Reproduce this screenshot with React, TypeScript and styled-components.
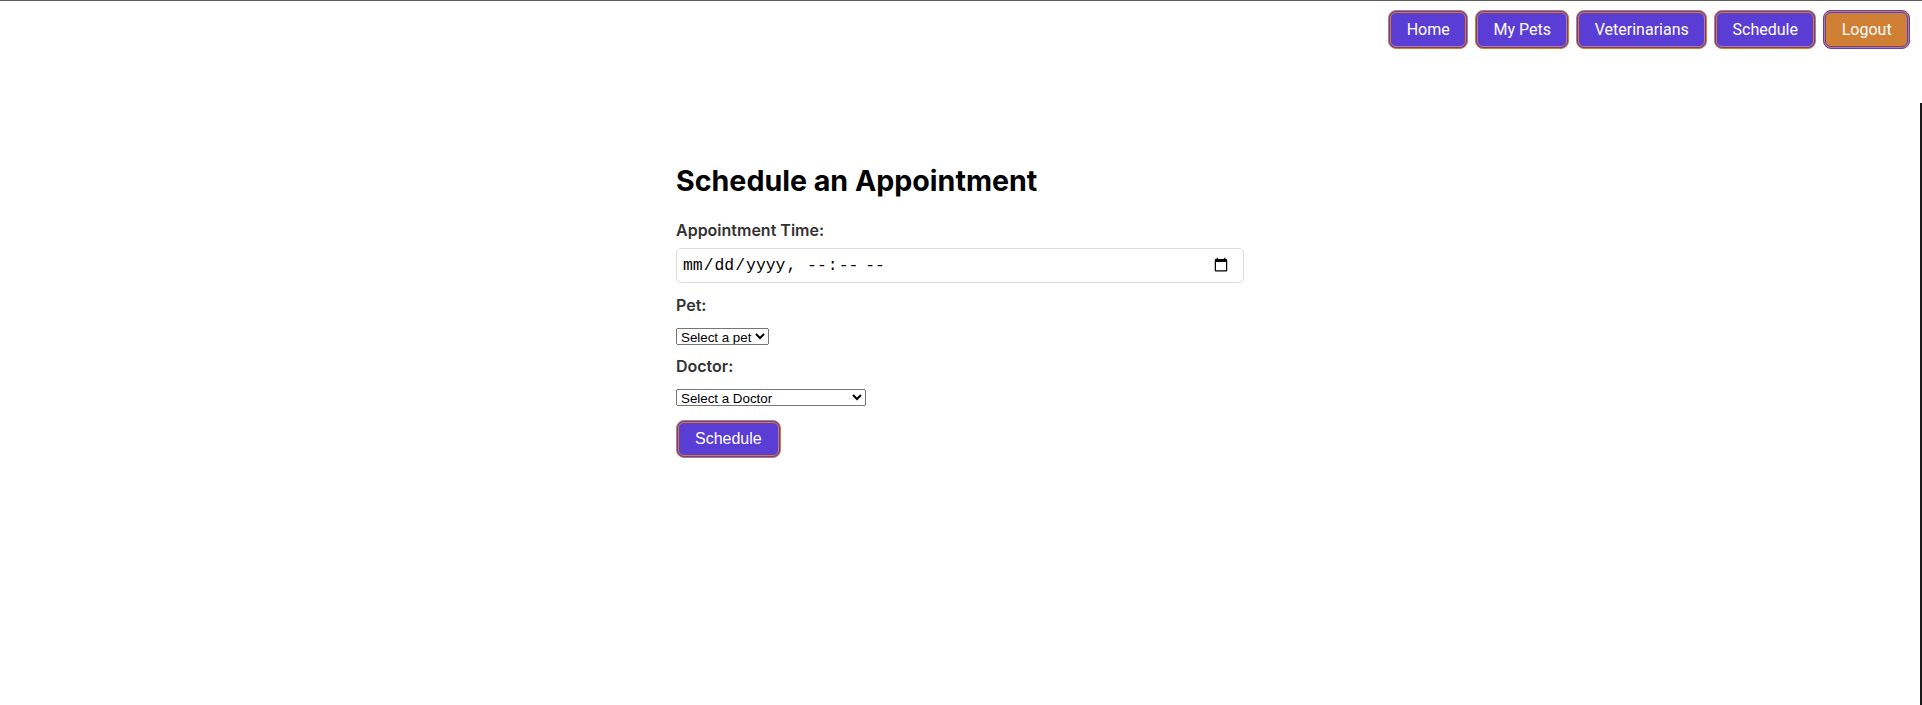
import React from "react";
import styled, { createGlobalStyle, css } from "styled-components";

const GlobalStyle = createGlobalStyle`
  html, body { margin: 0; padding: 0; background: #ffffff; }
  body { font-family: Inter, "Noto Sans", sans-serif; }
`;

const PURPLE = "#5a3dd4";
const ORANGE = "#d08034";

const Header = styled.header`
  display: flex;
  justify-content: flex-end;
  gap: 7px;
  border-top: 1px solid #5c5c5c;
  padding: 9px 12px 0 0;
`;

const NavButton = styled.button<{ $variant?: "primary" | "accent" }>`
  font-family: Roboto, "Liberation Sans", sans-serif;
  font-size: 16px;
  line-height: 19px;
  color: #ffffff;
  padding: 7px 15.4px;
  border-radius: 8px;
  cursor: pointer;
  ${(p) =>
    p.$variant === "accent"
      ? css`
          background: ${ORANGE};
          border: 3px double ${PURPLE};
        `
      : css`
          background: ${PURPLE};
          border: 3px double ${ORANGE};
        `}
`;

const Main = styled.main`
  margin-top: 54px;
  border-right: 2px solid #1a1a1a;
  min-height: calc(100vh - 102px);
  display: flex;
  justify-content: center;
`;

const Container = styled.section`
  width: 568px;
  padding-top: 61px;
`;

const Title = styled.h1`
  font-family: Inter, "Noto Sans", sans-serif;
  font-size: 28.6px;
  font-weight: 700;
  color: #000;
  margin: 0 0 23px 0;
  line-height: 34px;
`;

const Form = styled.form`
  display: flex;
  flex-direction: column;
  align-items: flex-start;
`;

const Label = styled.label<{ $gap?: number }>`
  display: block;
  font-family: Inter, "Noto Sans", sans-serif;
  font-size: 16px;
  font-weight: 600;
  line-height: 19px;
  color: #333333;
  margin-bottom: ${(p) => p.$gap ?? 8}px;
`;

const DateInput = styled.input`
  box-sizing: border-box;
  width: 568px;
  height: 35px;
  padding: 0 12px 0 5px;
  border: 1px solid #dcdcdc;
  border-radius: 5px;
  font-family: "Liberation Mono", monospace;
  font-size: 16.4px;
  color: #000;
  margin-bottom: 13px;
  background: #fff;
`;

const Select = styled.select<{ $width?: number }>`
  font-family: "Liberation Sans", Arial, sans-serif;
  font-size: 13.33px;
  height: 17px;
  ${(p) => (p.$width ? `width: ${p.$width}px;` : "")}
  margin-bottom: 12px;
`;

const SubmitButton = styled.button`
  font-family: "Liberation Sans", Arial, sans-serif;
  font-size: 16px;
  line-height: 18px;
  color: #fff;
  background: ${PURPLE};
  border: 3px double ${ORANGE};
  border-radius: 8px;
  padding: 7px 16px 7px 16px;
  margin-top: 2px;
  cursor: pointer;
`;

const navItems = ["Home", "My Pets", "Veterinarians", "Schedule"];

export default function App() {
  return (
    <>
      <GlobalStyle />
      <Header>
        {navItems.map((n) => (
          <NavButton key={n} $variant="primary">
            {n}
          </NavButton>
        ))}
        <NavButton $variant="accent">Logout</NavButton>
      </Header>
      <Main>
        <Container>
          <Title>Schedule an Appointment</Title>
          <Form onSubmit={(e) => e.preventDefault()}>
            <Label htmlFor="time">Appointment Time:</Label>
            <DateInput id="time" type="datetime-local" />
            <Label htmlFor="pet" $gap={13}>Pet:</Label>
            <Select id="pet" defaultValue="">
              <option value="">Select a pet</option>
            </Select>
            <Label htmlFor="doctor" $gap={13}>Doctor:</Label>
            <Select id="doctor" $width={190} defaultValue="">
              <option value="">Select a Doctor</option>
            </Select>
            <SubmitButton type="submit">Schedule</SubmitButton>
          </Form>
        </Container>
      </Main>
    </>
  );
}
